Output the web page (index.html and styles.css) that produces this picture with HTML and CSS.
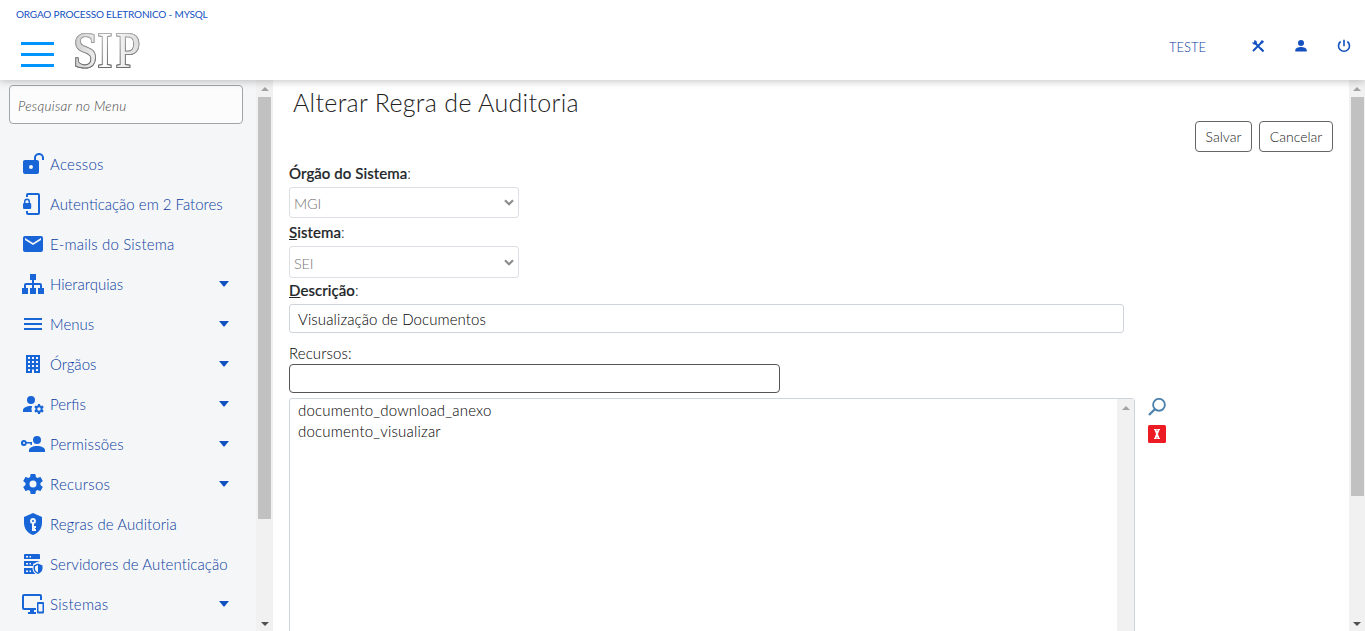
FILE: index.html
```html
<!DOCTYPE html>
<html lang="pt-BR">
<head>
<meta charset="utf-8">
<title>Alterar Regra de Auditoria</title>
<link rel="stylesheet" href="styles.css">
</head>
<body>
<header class="topbar">
  <div class="brand">
    <div class="org">ORGAO PROCESSO ELETRONICO - MYSQL</div>
    <div class="brand-row">
      <div class="burger"><span></span><span></span><span></span></div>
      <svg class="logo" width="76" height="58" viewBox="0 0 76 58">
        <defs><linearGradient id="metal" x1="0" y1="0" x2="1" y2="0"><stop offset="0" stop-color="#ccc"/><stop offset=".5" stop-color="#fff"/><stop offset="1" stop-color="#ddd"/></linearGradient>
        <linearGradient id="edge" x1="0" y1="0" x2="0" y2="1"><stop offset=".2" stop-color="#b0b0b0"/><stop offset=".8" stop-color="#6a6a6a"/></linearGradient></defs>
        <text class="logo-text" transform="scale(.88 1)" x="2.500 30 51" y="44.500">SIP</text>
      </svg>
    </div>
  </div>
  <nav class="user">
    <span class="user-name">TESTE</span>
    <svg width="14" height="14" viewBox="0 0 14 14"><path d="M2 12 11.500 2.500M5 5l7 7.200" stroke="#1351c1" stroke-width="1.900" fill="none"/><path d="M1 3.200 3 3.600 3.400 1 5.500 2 6.200 4.700 5 6 2.200 5.300zM10.200 1.500h1.800l1 1.200-2 2-1.700-1.200zM9 9.500 10 8.500l3.200 3.200-1.400 1.500z"/></svg>
    <svg width="12" height="14" viewBox="0 0 12 14"><circle cx="6" cy="4" r="3"/><path d="M.3 12.500v-1.400C.3 9 3.500 8 6 8s5.700 1 5.700 3.100v1.400z"/></svg>
    <svg width="14" height="14" viewBox="0 0 14 14"><path d="M7 .8v6.400M3.600 2.500A5.500 5.500 0 1 0 10.400 2.500" fill="none" stroke="#1351c1" stroke-width="1.600"/></svg>
  </nav>
</header>
<div class="shell">
  <aside class="sidebar">
    <div class="side-body">
      <div class="search">Pesquisar no Menu</div>
      <ul class="menu">
        <li><svg viewBox="0 0 24 24"><path d="M18 1c-2.760 0-5 2.240-5 5v2H4c-1.100 0-2 .9-2 2v10a2 2 0 0 0 2 2h12a2 2 0 0 0 2-2V10c0-1.100-.9-2-2-2h-1V6a3 3 0 0 1 6 0v2h2V6c0-2.760-2.240-5-5-5M10 13a2 2 0 1 1 0 4 2 2 0 0 1 0-4"/></svg><span class="wide">Acessos</span></li>
        <li><svg viewBox="0 0 24 24"><path d="M7 1h10a2 2 0 0 1 2 2v18a2 2 0 0 1-2 2H7a2 2 0 0 1-2-2v-2h2v2h10V3H7v2H5V3a2 2 0 0 1 2-2M3 11V9.500a3 3 0 0 1 6 0V11c.7 0 1.200.6 1.200 1.300v3.400c0 .7-.6 1.300-1.300 1.300H3.300C2.600 17 2 16.400 2 15.700v-3.400c0-.7.4-1.300 1-1.300m1.500 0h3V9.500c0-.8-.6-1.300-1.500-1.300s-1.500.5-1.500 1.300z"/></svg><span>Autenticação em 2 Fatores</span></li>
        <li><svg viewBox="0 0 24 24"><path d="m20 8-8 5-8-5V6l8 5 8-5m0-2H4c-1.110 0-2 .89-2 2v12a2 2 0 0 0 2 2h16a2 2 0 0 0 2-2V6a2 2 0 0 0-2-2"/></svg><span class="mid">E-mails do Sistema</span></li>
        <li><svg viewBox="0 0 24 24"><path d="M9 2h6v6h-2v3h6a2 2 0 0 1 2 2v3h2v6h-6v-6h2v-3h-6v3h2v6H9v-6h2v-3H5v3h2v6H1v-6h2v-3a2 2 0 0 1 2-2h6V8H9z"/></svg><span>Hierarquias</span><i></i></li>
        <li><svg viewBox="0 0 24 24"><path d="M3 6h18v2H3zm0 5h18v2H3zm0 5h18v2H3z"/></svg><span>Menus</span><i></i></li>
        <li><svg viewBox="0 0 24 24"><path d="M5 3v18h6v-3.500h2V21h6V3zm2 2h2v2H7zm4 0h2v2h-2zm4 0h2v2h-2zM7 9h2v2H7zm4 0h2v2h-2zm4 0h2v2h-2zm-8 4h2v2H7zm4 0h2v2h-2zm4 0h2v2h-2zm-8 4h2v2H7zm8 0h2v2h-2z"/></svg><span>Órgãos</span><i></i></li>
        <li><svg viewBox="0 0 24 24"><path d="M10 4a4 4 0 1 1 0 8 4 4 0 0 1 0-8m0 10c.4 0 .8 0 1.200.05A7 7 0 0 0 11 20H2v-2c0-2.200 3.600-4 8-4"/><path d="M17 12h2l.3 1.400 1 .6 1.400-.5 1 1.700-1.100 1v1.500l1.100 1-1 1.700-1.400-.5-1 .6L19 22h-2l-.3-1.500-1-.6-1.400.5-1-1.700 1.100-1v-1.500l-1.100-1 1-1.700 1.400.5 1-.6zm1 3.300a1.700 1.700 0 1 0 0 3.400 1.700 1.700 0 0 0 0-3.400"/></svg><span>Perfis</span><i></i></li>
        <li><svg viewBox="0 0 24 24"><path d="M16 4a4 4 0 1 1 0 8 4 4 0 0 1 0-8m0 10c4.400 0 8 1.800 8 4v2H8v-2c0-2.200 3.600-4 8-4M3 8a3 3 0 0 1 2.800 2H11v3H9.500v-1.500H5.800A3 3 0 1 1 3 8m0 2a1 1 0 1 0 0 2 1 1 0 0 0 0-2"/></svg><span class="mid">Permissões</span><i></i></li>
        <li><svg viewBox="0 0 24 24"><path d="M12 15.500A3.500 3.500 0 0 1 8.500 12 3.500 3.500 0 0 1 12 8.500a3.500 3.500 0 0 1 3.500 3.500 3.500 3.500 0 0 1-3.500 3.500m7.430-2.530c.04-.32.07-.64.07-.97s-.03-.66-.07-1l2.110-1.630c.19-.15.24-.42.12-.64l-2-3.460c-.12-.22-.39-.31-.61-.22l-2.490 1c-.52-.39-1.060-.73-1.690-.98l-.37-2.650A.506.506 0 0 0 14 2h-4c-.25 0-.46.18-.5.420l-.37 2.650c-.63.25-1.170.59-1.690.98l-2.490-1c-.22-.09-.49 0-.61.22l-2 3.460c-.13.22-.07.49.12.64L4.570 11c-.04.34-.07.67-.07 1s.03.65.07.97l-2.110 1.660c-.19.15-.25.42-.12.64l2 3.460c.12.22.39.3.61.22l2.490-1.010c.52.4 1.060.74 1.690.99l.37 2.650c.04.24.25.42.5.42h4c.25 0 .46-.18.5-.42l.37-2.650c.63-.26 1.170-.59 1.690-.99l2.490 1.010c.22.08.49 0 .61-.22l2-3.460c.12-.22.07-.49-.12-.64z"/></svg><span class="wide">Recursos</span><i></i></li>
        <li><svg viewBox="0 0 24 24"><path d="M12 1 3 5v6c0 5.550 3.840 10.740 9 12 5.160-1.260 9-6.450 9-12V5zm0 5a3 3 0 0 1 1 5.830V14h2v2h-1v1h1v2h-4v-7.170A3 3 0 0 1 12 6m0 2a1 1 0 1 0 0 2 1 1 0 0 0 0-2"/></svg><span class="slight">Regras de Auditoria</span></li>
        <li><svg viewBox="0 0 24 24"><path d="M4 2h14a1 1 0 0 1 1 1v4H3V3a1 1 0 0 1 1-1m1 2v1.500h2V4zm3.500 0v1.500h1.500V4zM3 9h16l-3 1-4 2v2H3zm2 2v1.500h2V11zm3.500 0v1.500h1.500V11zM3 16h8.500c0 2.500 1 4.500 3 6H4a1 1 0 0 1-1-1zm2 2.500V20h2v-1.500zm3.500 0V20h1.500v-1.500z"/><path d="m17 11.500 4.500 2v3c0 2.500-1.800 4.600-4.500 5.500-2.700-.9-4.500-3-4.500-5.500v-3zm0 1.600-3 1.300V17c0 1.500 1.200 2.700 3 3.500z"/></svg><span class="slight">Servidores de Autenticação</span></li>
        <li><svg viewBox="0 0 24 24"><path d="M3 2h16a2 2 0 0 1 2 2v4h-2V4H3v12h12v2h-2v2h2v2H7v-2h2v-2H3a2 2 0 0 1-2-2V4a2 2 0 0 1 2-2m14 8h5a1 1 0 0 1 1 1v9.500a1 1 0 0 1-1 1h-5a1 1 0 0 1-1-1V11a1 1 0 0 1 1-1m.5 2v7.500h4V12z"/></svg><span class="wide">Sistemas</span><i></i></li>
      </ul>
    </div>
    <div class="scroll"><b class="up"></b><div class="thumb thumb-side"></div><b class="down"></b></div>
  </aside>
  <main class="content">
    <h1>Alterar Regra de Auditoria</h1>
    <div class="actions"><button class="save">Salvar</button><button class="cancel">Cancelar</button></div>
    <div class="label strong l1">Órgão do Sistema<em>:</em></div>
    <div class="select s1"><span>MGI</span><svg width="10" height="7" viewBox="0 0 10 7"><path d="m1 1.300 4 3.900 4-3.900" fill="none" stroke="#8c8c8c" stroke-width="2.200"/></svg></div>
    <div class="label strong l2"><u>S</u>istema<em>:</em></div>
    <div class="select s2"><span>SEI</span><svg width="10" height="7" viewBox="0 0 10 7"><path d="m1 1.300 4 3.900 4-3.900" fill="none" stroke="#8c8c8c" stroke-width="2.200"/></svg></div>
    <div class="label strong l3"><u>D</u>escrição<em>:</em></div>
    <div class="input desc">Visualização de Documentos</div>
    <div class="label l4">Recursos:</div>
    <div class="input rec"></div>
    <div class="list-row">
      <div class="list">
        <div class="options"><div>documento_download_anexo</div><div>documento_visualizar</div></div>
        <div class="scroll"><b class="up"></b></div>
      </div>
      <div class="tools">
        <svg width="18" height="18" viewBox="0 0 18 18"><circle cx="11" cy="6.800" r="5.900" fill="none" stroke="#4d82ad" stroke-width="1.900"/><path d="M6.800 11.200 1 17" stroke="#4d82ad" stroke-width="2.300"/></svg>
        <svg width="18" height="18" viewBox="0 0 18 18"><rect width="18" height="18" rx="1.500" fill="#ed1c24"/><path d="M6 4.500h2.700M9.300 4.500H12M6 13.500h2.700M9.300 13.500H12" stroke="#fff"/><path d="m7.300 4.500 3.400 9M10.700 4.500l-3.400 9" stroke="#fff" stroke-width="1.900"/></svg>
      </div>
    </div>
  </main>
  <div class="scroll page-scroll"><b class="up"></b><div class="thumb thumb-page"></div><b class="down"></b></div>
</div>
</body>
</html>
```
FILE: styles.css
```css
* { box-sizing: border-box; }
body { margin: 0; height: 631px; overflow: hidden; display: flex; flex-direction: column; background: #fff; font-family: Lato, "Open Sans", sans-serif; font-weight: 400; font-size: 15px; color: #212529; }
.topbar { flex: none; height: 80px; display: flex; justify-content: space-between; background: #fff; box-shadow: 0 1px 8px rgba(0,0,0,.25); z-index: 2; position: relative; }
.org { margin: 7px 0 0 16px; height: 14px; line-height: 14px; font-size: 10px; letter-spacing: -.17px; color: #1351c1; white-space: nowrap; }
.brand-row { display: flex; }
.burger { margin: 21px 0 0 21px; width: 33px; height: 25px; display: flex; flex-direction: column; justify-content: space-between; }
.burger span { height: 3px; background: #0094ff; }
.logo { margin: 1px 0 0 17px; }
.logo-text { font-family: "Liberation Serif", serif; font-size: 50px; fill: url(#metal); stroke: url(#edge); stroke-width: 2px; paint-order: stroke; filter: drop-shadow(0 0 .6px #777); }
.user { display: flex; padding-top: 39px; margin-right: 14px; height: 60px; color: #1351b4; }
.user svg { fill: #1351c1; display: block; }
.user-name { font-size: 13px; line-height: 17px; margin-right: 45px; font-weight: 300; color: #0a3ca0; }
.user svg + svg { margin-left: 30px; }
.user svg + svg + svg { margin-left: 30px; }
.shell { flex: 1; min-height: 0; display: flex; }
.sidebar { width: 273px; display: flex; background: #f4f6f8; }
.side-body { flex: 1; }
.search { margin: 5px 13px 0 9px; height: 39px; padding: 0 8px; border: 1px solid #9fa5a9; border-radius: 4px; background: #fcfcfc; line-height: 41px; font-size: 13.500px; letter-spacing: .3px; font-style: italic; font-weight: 300; color: #444; }
.menu { list-style: none; margin: 20px 0 0; padding: 0 27px 0 21px; color: #0a3ca0; font-weight: 300; }
.menu li { display: flex; align-items: center; height: 40px; white-space: nowrap; }
.menu svg { width: 24px; height: 24px; flex: none; margin-right: 5px; fill: #1865d8; fill-rule: evenodd; }
.menu i { margin-left: auto; border: 5.500px solid transparent; border-top: 6px solid #1351c1; border-bottom: 0; }
.menu span { line-height: 20px; padding-bottom: 1px; }
.menu .wide { letter-spacing: .27px; }
.menu .mid { letter-spacing: .17px; }
.menu .slight { letter-spacing: .07px; }
.scroll { flex: none; width: 17px; background: #f1f1f1; display: flex; flex-direction: column; align-items: center; }
.up { margin: 7px 0 5px; border: 4px solid transparent; border-bottom: 4px solid #a3a3a3; border-top: 0; }
.down { margin: auto 0 5px; border: 4px solid transparent; border-top: 4px solid #505050; border-bottom: 0; }
.thumb { width: 13px; background: #c1c1c1; margin-top: 1px; }
.thumb-side { height: 422px; }
.thumb-page { height: 399px; }
.page-scroll { width: 16px; }
.content { flex: 1; min-width: 0; padding-left: 16px; }
h1 { margin: 6px 0 0 4px; height: 33px; line-height: 32px; font-size: 25px; letter-spacing: .32px; font-weight: 300; color: #222; }
.actions { display: flex; justify-content: flex-end; gap: 7px; padding: 2px 16px 0 0; height: 34px; }
button { height: 31px; padding: 0; border: 1px solid #666; border-radius: 4px; background: #fff; font: 300 14px Lato, sans-serif; color: #222; }
.save { width: 57px; }
.cancel { width: 74px; }
.label { height: 19px; line-height: 18px; white-space: nowrap; font-size: 15px; font-weight: 300; color: #000; }
.strong { font-weight: 500; -webkit-text-stroke: .2px #212529; letter-spacing: .07px; color: #212529; }
.strong em { -webkit-text-stroke: 0; }
.label em { font-style: normal; font-weight: 300; }
.l1 { margin-top: 11px; }
.select { width: 230px; display: flex; justify-content: space-between; align-items: center; padding: 0 4px; border: 1px solid #dcdfe3; border-radius: 3px; color: #777; font-size: 14.500px; letter-spacing: -.2px; font-weight: 300; }
.select span { padding-top: 2px; }
.s1 { height: 31px; margin-top: 4px; }
.l2 { margin-top: 5px; }
.s2 { height: 32px; margin-top: 4px; }
.l3 { margin-top: 3px; }
.input { height: 29px; border: 1px solid #ced4da; border-radius: 3px; padding: 0 8px; line-height: 29px; font-size: 15px; font-weight: 300; letter-spacing: .1px; color: #000; }
.desc { width: 835px; margin-top: 4px; }
.l4 { margin-top: 11px; letter-spacing: .1px; }
.rec { width: 491px; margin-top: 1px; border-color: #555; border-radius: 4px; }
.list-row { display: flex; margin-top: 5px; }
.list { width: 846px; height: 260px; display: flex; border: 1px solid #ced4da; border-radius: 3px; }
.options { flex: 1; padding: 1px 8px; font-size: 15px; font-weight: 300; letter-spacing: .2px; line-height: 21px; color: #000; }
.tools { display: flex; flex-direction: column; gap: 9px; margin-left: 13px; }
```
